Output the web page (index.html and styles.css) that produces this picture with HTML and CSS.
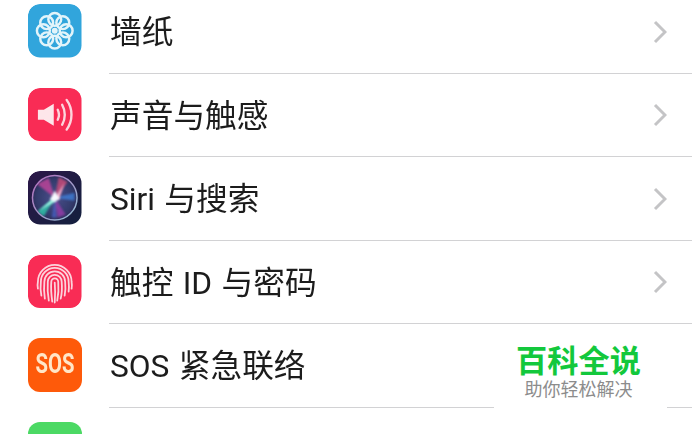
FILE: index.html
```html
<!DOCTYPE html>
<html lang="zh">
<head>
<meta charset="utf-8">
<title>设置</title>
<link rel="stylesheet" href="styles.css">
</head>
<body>
<main class="screen">
<ul class="list">
  <li class="row">
    <svg class="icon" viewBox="0 0 54 54"><rect width="54" height="54" rx="12" fill="#31a5dc"/>
      <g fill="none" stroke="#e2f4fa" stroke-width="2.500">
        <circle cx="27" cy="15.500" r="6.500"/>
        <circle cx="27" cy="15.500" r="6.500" transform="rotate(45 27 27)"/>
        <circle cx="27" cy="15.500" r="6.500" transform="rotate(90 27 27)"/>
        <circle cx="27" cy="15.500" r="6.500" transform="rotate(135 27 27)"/>
        <circle cx="27" cy="15.500" r="6.500" transform="rotate(180 27 27)"/>
        <circle cx="27" cy="15.500" r="6.500" transform="rotate(225 27 27)"/>
        <circle cx="27" cy="15.500" r="6.500" transform="rotate(270 27 27)"/>
        <circle cx="27" cy="15.500" r="6.500" transform="rotate(315 27 27)"/>
      </g>
      <circle cx="27" cy="27" r="3" fill="#e2f4fa"/>
    </svg>
    <span class="label">墙纸</span>
    <svg class="chevron" viewBox="0 0 14 24"><path d="M2 2l10 10L2 22"/></svg>
  </li>
  <li class="row">
    <svg class="icon" viewBox="0 0 54 54"><rect width="54" height="54" rx="12" fill="#f92c55"/>
      <path d="M10 22h6l10-6v22l-10-6h-6z" fill="#fde6ea"/>
      <g fill="none" stroke="#fcd5dd" stroke-width="2.400" stroke-linecap="round">
        <path d="M30 22c1.500 3 1.500 7 0 10"/>
        <path d="M34.500 17c3.500 6 3.500 14 0 20"/>
        <path d="M39 12c6.500 9 6.500 21 0 30"/>
      </g>
    </svg>
    <span class="label">声音与触感</span>
    <svg class="chevron" viewBox="0 0 14 24"><path d="M2 2l10 10L2 22"/></svg>
  </li>
  <li class="row">
    <svg class="icon" viewBox="0 0 54 54">
      <defs>
        <radialGradient id="siriBg"><stop offset="0" stop-color="#4a4f8c"/><stop offset=".8" stop-color="#333b6c"/><stop offset="1" stop-color="#2e2f5c"/></radialGradient>
        <linearGradient id="siriRing" x1="0" y1="0" x2="1" y2="1"><stop offset="0" stop-color="#b56abb"/><stop offset="1" stop-color="#8fc0d4"/></linearGradient>
        <linearGradient id="siriTile" x1="0" y1="0" x2="1" y2="1"><stop offset="0" stop-color="#2c1848"/><stop offset="1" stop-color="#13203e"/></linearGradient>
        <filter id="soft" x="-20%" y="-20%" width="140%" height="140%"><feGaussianBlur stdDeviation="1.200"/></filter>
        <clipPath id="siriClip"><circle cx="27" cy="27" r="22.500"/></clipPath>
      </defs>
      <rect width="54" height="54" rx="12" fill="url(#siriTile)"/>
      <circle cx="27" cy="27" r="22.500" fill="url(#siriBg)"/>
      <g clip-path="url(#siriClip)">
        <g filter="url(#soft)" opacity=".8">
          <path d="M27 27L9 13l12-6z" fill="#c4459c"/>
          <path d="M27 27L31 6l9 5z" fill="#cf4c78"/>
          <path d="M27 27l20-5 0 8z" fill="#3f7fd8"/>
          <path d="M27 27l11 17-8 3z" fill="#9a3cac"/>
          <path d="M27 27L9 41l7 5z" fill="#2fc8ac"/>
          <path d="M27 27l-3 20 5 0z" fill="#4a60c4"/>
        </g>
        <path d="M26 27L11 40l18-10z" fill="#9ff3e4" filter="url(#soft)"/>
        <path d="M27 27l10-15-6 17z" fill="#ffb2cc" filter="url(#soft)"/>
        <path d="M22 29l5-9 5 8-5 3z" fill="#f7f9ff" filter="url(#soft)"/>
      </g>
      <circle cx="27" cy="27" r="22.500" fill="none" stroke="url(#siriRing)" stroke-width="1.500"/>
    </svg>
    <span class="label">Siri 与搜索</span>
    <svg class="chevron" viewBox="0 0 14 24"><path d="M2 2l10 10L2 22"/></svg>
  </li>
  <li class="row">
    <svg class="icon" viewBox="0 0 54 54"><rect width="54" height="54" rx="12" fill="#f92c55"/>
      <g fill="none" stroke="#fcd3dc" stroke-width="1.800" stroke-linecap="round">
        <path d="M10 34c-.5-3-.5-5 0-7a17 17 0 0 1 34 0c.5 3 .5 5 0 7"/>
        <path d="M13.500 41c-1-5-1-10-.5-14a14 14 0 0 1 28 0c.5 4 .5 6 0 10"/>
        <path d="M17 44c-1-6-1-12-.5-17a10.500 10.500 0 0 1 21 0c.5 5 .5 9-.5 14"/>
        <path d="M21 46c-1-6-1.500-13-1-19a7 7 0 0 1 14 0c.5 6 .5 11-1 17"/>
        <path d="M24.500 47c-1-7-1.500-14-1-20a3.500 3.500 0 0 1 7 0c.5 6 .5 12-1 19"/>
        <path d="M27 28c.5 6 .5 13 0 20"/>
      </g>
    </svg>
    <span class="label">触控 ID 与密码</span>
    <svg class="chevron" viewBox="0 0 14 24"><path d="M2 2l10 10L2 22"/></svg>
  </li>
  <li class="row">
    <div class="icon icon-sos"><span class="sos-text">SOS</span></div>
    <span class="label">SOS 紧急联络</span>
  </li>
  <li class="row">
    <div class="icon icon-green"></div>
  </li>
</ul>
<aside class="mark">
  <strong class="mark-title">百科全说</strong>
  <span class="mark-sub">助你轻松解决</span>
</aside>
</main>
</body>
</html>
```

FILE: styles.css
```css
html, body {
  margin: 0;
  padding: 0;
  background: #fff;
}
.screen {
  position: relative;
  width: 692px;
  height: 434px;
  overflow: hidden;
  font-family: "Roboto", "Noto Sans CJK SC", sans-serif;
}
.list {
  list-style: none;
  margin: -10px 0 0;
  padding: 0 0 0 28px;
}
.row {
  position: relative;
  display: flex;
  align-items: center;
  height: 83.5px;
  box-sizing: border-box;
  padding: 0 25px 2px 0;
}
.row::after {
  content: "";
  position: absolute;
  left: 81px;
  right: 0;
  bottom: 0;
  height: 1px;
  background: #d2d2d4;
}
.icon {
  flex: none;
  width: 53.5px;
  height: 53.5px;
  border-radius: 12px;
  filter: blur(0.4px);
}
.icon-sos {
  display: flex;
  align-items: center;
  justify-content: center;
  background: #fe5a0a;
}
.sos-text {
  color: #ffe6c8;
  font: 700 27px/1 "Roboto", "Liberation Sans", sans-serif;
  transform: scaleX(0.75);
}
.icon-green {
  background: #4cd964;
}
.label {
  flex: 1;
  margin-left: 28.5px;
  padding-top: 5px;
  font-size: 31.7px;
  word-spacing: 1.5px;
  line-height: 40px;
  font-weight: 400;
  color: #1c1c1c;
  white-space: nowrap;
  filter: blur(0.35px);
}
.chevron {
  flex: none;
  width: 14px;
  height: 24px;
  fill: none;
  stroke: #c4c4c6;
  stroke-width: 3;
  filter: blur(0.5px);
  margin-top: 2px;
}
.mark {
  position: absolute;
  left: 494px;
  top: 339px;
  width: 173px;
  height: 73px;
  background: #fff;
  display: flex;
  flex-direction: column;
  align-items: center;
}
.mark-title {
  margin-top: 4px;
  margin-left: -4px;
  font-size: 31.2px;
  line-height: 38px;
  font-weight: 700;
  color: #13c83c;
}
.mark-sub {
  margin-left: -4px;
  margin-top: -3px;
  font-size: 18px;
  line-height: 24px;
  color: #8c8c8c;
}
```
